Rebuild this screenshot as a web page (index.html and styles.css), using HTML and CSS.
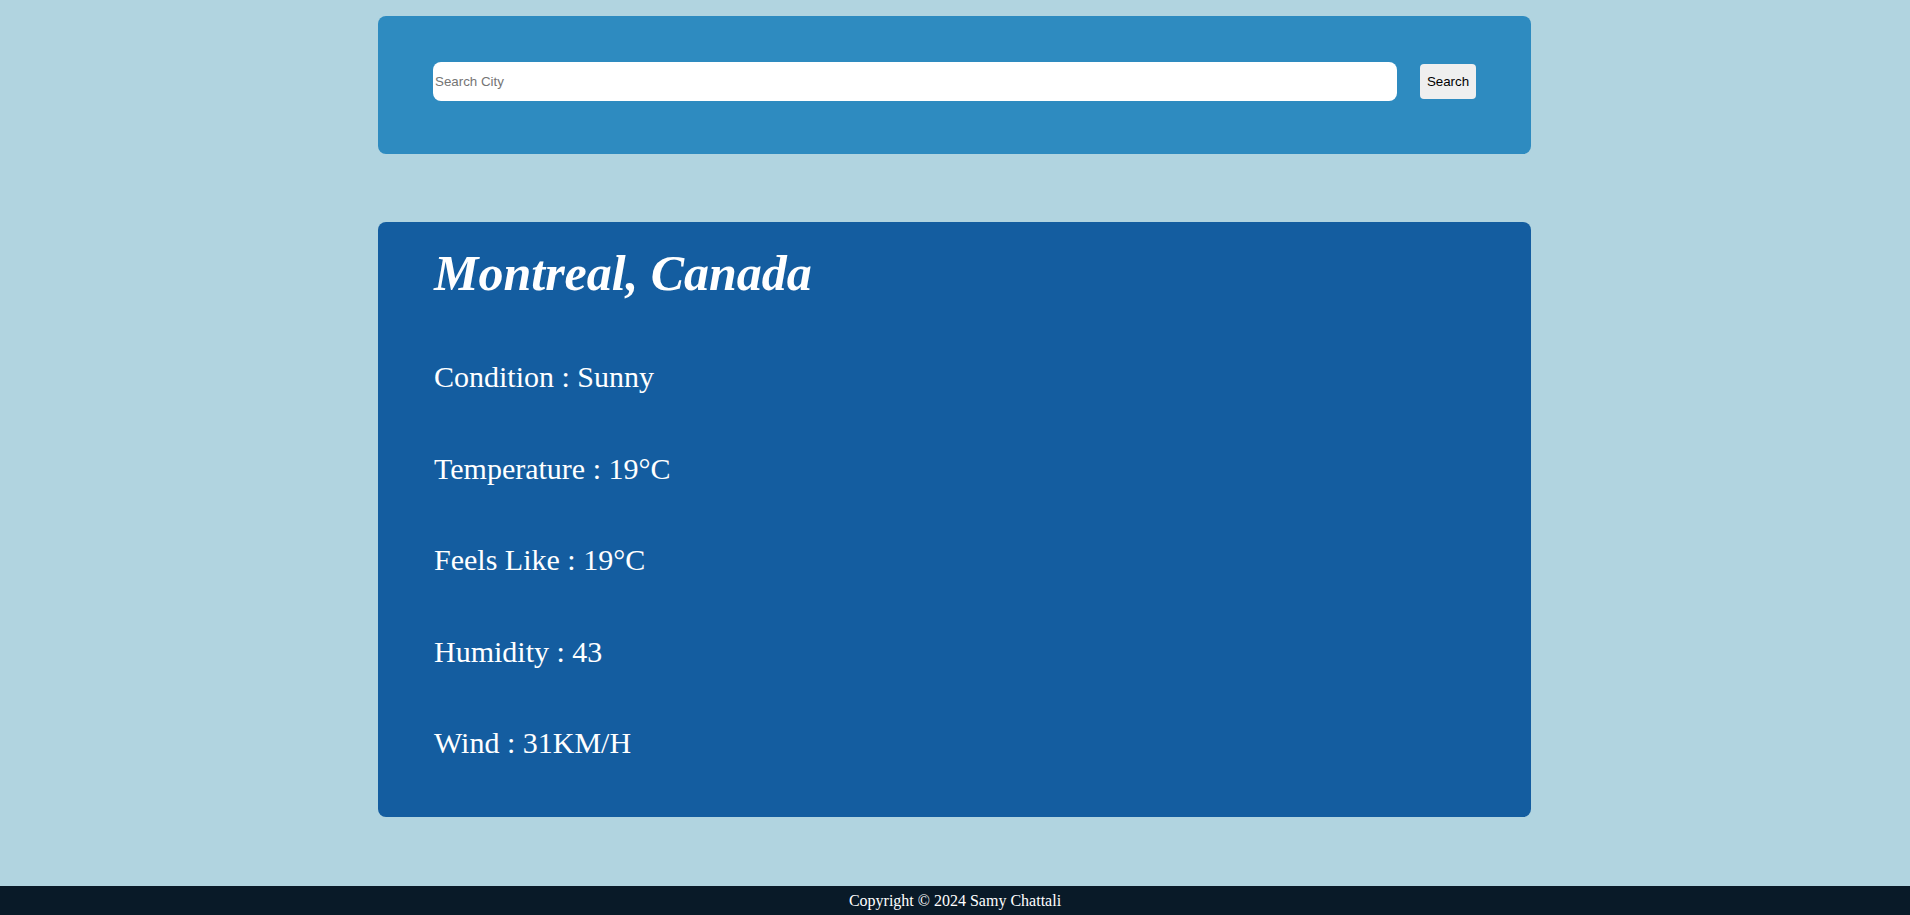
FILE: index.html
```html
<!DOCTYPE html>
<html lang="en">
<head>
<meta charset="UTF-8">
<title>Weather</title>
<link rel="stylesheet" href="styles.css">
</head>
<body>
<main class="page">
  <section class="search-card">
    <input class="search-input" type="text" placeholder="Search City">
    <button class="search-btn" type="button">Search</button>
  </section>
  <section class="weather-card">
    <h1 class="city">Montreal, Canada</h1>
    <p class="stat">Condition : Sunny</p>
    <p class="stat">Temperature : 19°C</p>
    <p class="stat">Feels Like : 19°C</p>
    <p class="stat">Humidity : 43</p>
    <p class="stat">Wind : 31KM/H</p>
  </section>
</main>
<footer class="footer">Copyright © 2024 Samy Chattali</footer>
</body>
</html>
```
FILE: styles.css
```css
html, body {
  margin: 0;
  padding: 0;
}
body {
  background: #b1d4e0;
  font-family: "Liberation Serif", "Times New Roman", serif;
  color: #fff;
  min-height: 915px;
}
.page {
  width: 1153px;
  margin: 0 0 0 calc(50% - 577px);
  padding-top: 16px;
  display: flex;
  flex-direction: column;
  gap: 68px;
}
.search-card {
  background: #2e8bc0;
  border-radius: 8px;
  height: 138px;
  box-sizing: border-box;
  padding: 46px 55px 53px;
  display: flex;
  align-items: center;
  gap: 23px;
}
.search-input {
  flex: 1;
  height: 39px;
  box-sizing: border-box;
  border: none;
  border-radius: 8px;
  padding: 0 2px;
  font-family: "Liberation Sans", Arial, sans-serif;
  font-size: 13.33px;
  background: #fff;
  outline: none;
}
.search-input::placeholder {
  color: #757575;
}
.search-btn {
  width: 56px;
  height: 35px;
  border: none;
  border-radius: 4px;
  background: #efefef;
  color: #000;
  font-family: "Liberation Sans", Arial, sans-serif;
  font-size: 13.33px;
  padding: 0;
}
.weather-card {
  background: #145da0;
  border-radius: 8px;
  padding: 22px 56px 57px;
  display: flex;
  flex-direction: column;
  gap: 57.6px;
}
.city {
  margin: 0 0 0.5px;
  font-size: 50px;
  font-weight: bold;
  font-style: italic;
  line-height: normal;
}
.stat {
  margin: 0;
  font-size: 30px;
  line-height: normal;
}
.footer {
  position: fixed;
  left: 0;
  right: 0;
  bottom: 0;
  height: 29px;
  box-sizing: border-box;
  padding-top: 6px;
  background: #091a28;
  text-align: center;
  font-size: 16px;
  line-height: normal;
}
```
